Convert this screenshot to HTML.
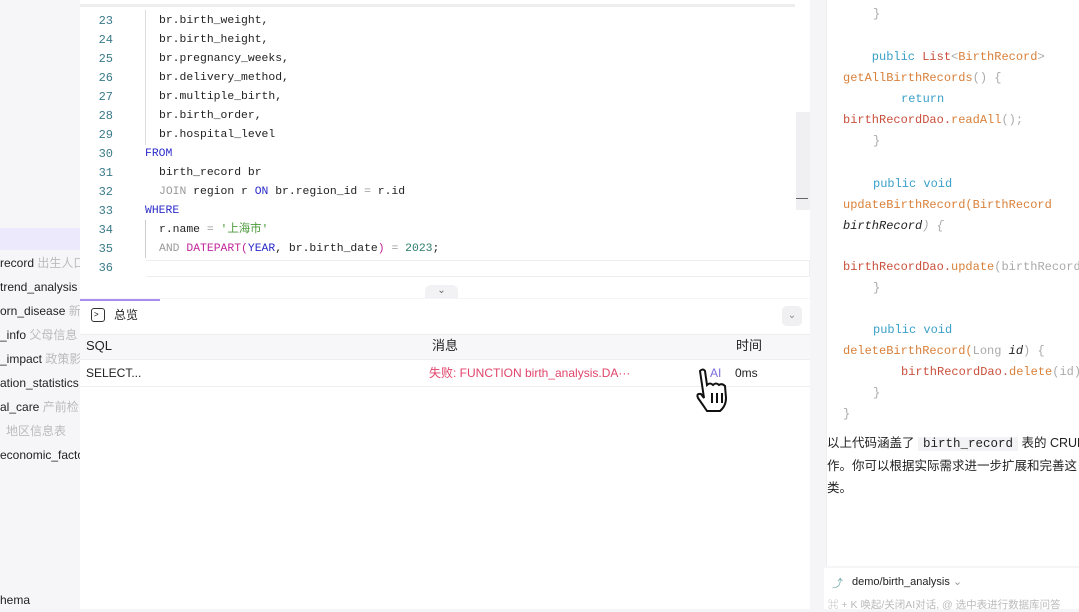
<!DOCTYPE html>
<html><head><meta charset="utf-8"><style>
*{margin:0;padding:0;box-sizing:border-box}
body{width:1079px;height:609px;overflow:hidden;background:#f5f5f7;font-family:"Liberation Sans","Noto Sans CJK SC",sans-serif;position:relative}
.abs{position:absolute;white-space:nowrap}
#side{left:0;top:0;width:80px;height:609px;background:#f6f6f8;overflow:hidden}
.si{position:absolute;font-size:12px;line-height:14px;height:14px;color:#222;white-space:nowrap}
.si span{color:#bbb}
#ed{left:80px;top:0;width:730px;height:298px;background:#fff}
.ln{position:absolute;left:80px;width:33px;text-align:right;font-family:"Liberation Mono",monospace;font-size:12px;line-height:14px;color:#3a7a8a}
.cd{position:absolute;font-family:"Liberation Mono",monospace;font-size:11.4px;line-height:14px;color:#222;white-space:pre}
.kw{color:#2b2bc8}.gr{color:#999}.fn{color:#c0259a}.st{color:#4a9a3a}.nm{color:#2a7a6a}
#bot{left:80px;top:299px;width:730px;height:310px;background:#fff}
.t{position:absolute;line-height:14px;height:14px}
#rp{left:826px;top:0;width:253px;height:566px;background:#fff;border-left:1px solid #eee;overflow:hidden}
.rc{position:absolute;font-family:"Liberation Mono",monospace;font-size:12px;line-height:14px;white-space:pre;color:#c9503c}
.b{color:#3aa0c8}.o{color:#d9803a}.g{color:#aaa}.k{color:#222;font-style:italic}
</style></head><body>
<div id="side" class="abs">
<div style="position:absolute;left:0;top:228px;width:80px;height:22px;background:#ebe9fb"></div>
<div class="si" style="top:256px">record <span>出生人口</span></div>
<div class="si" style="top:280px">trend_analysis</div>
<div class="si" style="top:304px">orn_disease <span>新</span></div>
<div class="si" style="top:328px">_info <span>父母信息</span></div>
<div class="si" style="top:352px">_impact <span>政策影</span></div>
<div class="si" style="top:376px">ation_statistics</div>
<div class="si" style="top:400px">al_care <span>产前检</span></div>
<div class="si" style="top:424px;left:6px"><span>地区信息表</span></div>
<div class="si" style="top:448px">economic_facto</div>
<div class="si" style="top:593px">hema</div>
</div>
<div id="ed" class="abs">
<div style="position:absolute;left:0;top:4px;width:715px;height:3px;background:#eee"></div>
<div style="position:absolute;left:65px;top:10px;width:1px;height:135px;background:#ddd"></div>
<div style="position:absolute;left:65px;top:220px;width:1px;height:38px;background:#ccc"></div>
<div style="position:absolute;left:66px;top:260px;width:664px;height:17px;border:1px solid #eee;border-left:none"></div>
<div style="position:absolute;left:345px;top:285px;width:33px;height:13px;background:#f2f2f4;border-radius:6px 6px 0 0;font-size:10px;color:#666;text-align:center">&#8964;</div>
<div style="position:absolute;left:716px;top:112px;width:14px;height:98px;background:#f0f0f2"></div>
<div style="position:absolute;left:716px;top:198px;width:12px;height:1px;background:#666"></div>
</div>
<div class="ln" style="top:14px">23</div><div class="ln" style="top:33px">24</div><div class="ln" style="top:52px">25</div><div class="ln" style="top:71px">26</div><div class="ln" style="top:90px">27</div><div class="ln" style="top:109px">28</div><div class="ln" style="top:128px">29</div><div class="ln" style="top:147px">30</div><div class="ln" style="top:166px">31</div><div class="ln" style="top:185px">32</div><div class="ln" style="top:204px">33</div><div class="ln" style="top:223px">34</div><div class="ln" style="top:242px">35</div><div class="ln" style="top:261px">36</div>
<div class="cd" style="left:159px;top:14px">br.birth_weight,</div>
<div class="cd" style="left:159px;top:33px">br.birth_height,</div>
<div class="cd" style="left:159px;top:52px">br.pregnancy_weeks,</div>
<div class="cd" style="left:159px;top:71px">br.delivery_method,</div>
<div class="cd" style="left:159px;top:90px">br.multiple_birth,</div>
<div class="cd" style="left:159px;top:109px">br.birth_order,</div>
<div class="cd" style="left:159px;top:128px">br.hospital_level</div>
<div class="cd kw" style="left:145px;top:147px">FROM</div>
<div class="cd" style="left:159px;top:166px">birth_record br</div>
<div class="cd" style="left:159px;top:185px"><span class="gr">JOIN</span> region r <span class="kw">ON</span> br.region_id <span class="gr">=</span> r.id</div>
<div class="cd kw" style="left:145px;top:204px">WHERE</div>
<div class="cd" style="left:159px;top:223px">r.name <span class="gr">=</span> <span class="st">'上海市'</span></div>
<div class="cd" style="left:159px;top:242px"><span class="gr">AND</span> <span class="fn">DATEPART(</span><span class="kw">YEAR</span>, br.birth_date<span class="fn">)</span> <span class="gr">=</span> <span class="nm">2023</span>;</div>
<div id="bot" class="abs">
<div style="position:absolute;left:0;top:0;width:80px;height:2px;background:#a98ef0"></div>
<div style="position:absolute;left:11px;top:9px;width:14px;height:14px;border:1.3px solid #333;border-radius:3px;font-size:8px;line-height:11px;padding-left:2px">&gt;</div>
<div class="t" style="left:34px;top:9px;font-size:12px;color:#222">总览</div>
<div style="position:absolute;left:702px;top:7px;width:20px;height:20px;background:#f0f0f2;border-radius:5px;font-size:10px;color:#888;text-align:center;line-height:20px">&#8964;</div>
<div style="position:absolute;left:0;top:35px;width:730px;height:26px;background:#f7f7f9;border-top:1px solid #eee;border-bottom:1px solid #eee"></div>
<div class="t" style="left:6px;top:40px;font-size:13px;color:#222">SQL</div>
<div class="t" style="left:352px;top:40px;font-size:13px;color:#222">消息</div>
<div class="t" style="left:656px;top:40px;font-size:13px;color:#222">时间</div>
<div style="position:absolute;left:0;top:87px;width:730px;height:1px;background:#eee"></div>
<div class="t" style="left:6px;top:67px;font-size:12px;color:#222">SELECT...</div>
<div class="t" style="left:349px;top:67px;font-size:12px;color:#e0446a">失败: FUNCTION birth_analysis.DA···</div>
<div class="t" style="left:630px;top:67px;font-size:12px;color:#7a6ae0">AI</div>
<div class="t" style="left:655px;top:67px;font-size:12px;color:#222">0ms</div>
<svg style="position:absolute;left:610px;top:66px" width="48" height="48" viewBox="0 0 48 48"><path d="M10 6 q3-3 5 0 l2 14 q3-3 6 0 q3-3 6 0 q3-2 6 1 l1 12 q0 8-6 13 l-13 0 q-4-6-9-13 q-2-5 3-4 l3 4 z" fill="#fff" stroke="#111" stroke-width="2"/><path d="M22 28v10M27 28v10M32 28v10" stroke="#111" stroke-width="2"/></svg>
</div>
<div id="rp" class="abs">
<div class="rc g" style="left:46px;top:7px">}</div>
<div class="rc" style="left:16px;top:50px"><span class="b">    public</span> List<span class="g">&lt;</span><span class="o">BirthRecord</span><span class="g">&gt;</span></div>
<div class="rc o" style="left:16px;top:71px">getAllBirthRecords<span class="g">() {</span></div>
<div class="rc b" style="left:74px;top:92px">return</div>
<div class="rc" style="left:16px;top:113px">birthRecordDao.<span class="o">readAll</span><span class="g">();</span></div>
<div class="rc g" style="left:46px;top:134px">}</div>
<div class="rc b" style="left:46px;top:177px">public void</div>
<div class="rc o" style="left:16px;top:198px">updateBirthRecord(BirthRecord</div>
<div class="rc k" style="left:16px;top:219px">birthRecord<span class="g">) {</span></div>
<div class="rc" style="left:16px;top:260px">birthRecordDao.<span class="o">update</span><span class="g">(birthRecord)</span></div>
<div class="rc g" style="left:46px;top:281px">}</div>
<div class="rc b" style="left:46px;top:323px">public void</div>
<div class="rc o" style="left:16px;top:344px">deleteBirthRecord(<span class="g">Long</span> <span class="k">id</span><span class="g">) {</span></div>
<div class="rc" style="left:74px;top:365px">birthRecordDao.<span class="o">delete</span><span class="g">(id);</span></div>
<div class="rc g" style="left:46px;top:386px">}</div>
<div class="rc g" style="left:16px;top:407px">}</div>
<div style="position:absolute;left:0;top:432px;font-size:12.5px;color:#222;line-height:22px;width:300px;white-space:normal">以上代码涵盖了 <span style="font-family:'Liberation Mono',monospace;background:#f3f3f5;padding:0 5px">birth_record</span> 表的 CRUD操<br>作。你可以根据实际需求进一步扩展和完善这<br>类。</div>
</div>
<div class="abs" style="left:824px;top:568px;width:255px;height:41px;background:#fff"></div>
<div class="abs" style="left:832px;top:575px;font-size:11px;color:#7aa">&#10548;</div>
<div class="abs" style="left:852px;top:575px;font-size:11px;color:#222">demo/birth_analysis <span style="color:#999">&#8964;</span></div>
<div class="abs" style="left:828px;top:597px;font-size:10.5px;color:#bbb">⌘ + K 唤起/关闭AI对话, @ 选中表进行数据库问答</div>
</body></html>
